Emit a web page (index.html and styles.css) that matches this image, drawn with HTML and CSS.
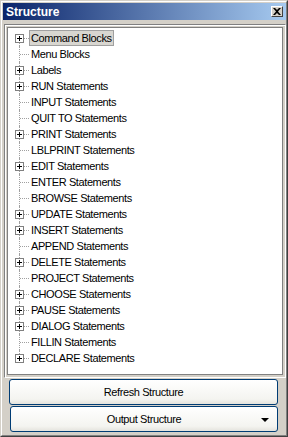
FILE: index.html
```html
<!DOCTYPE html>
<html>

<head>
    <title>Structure</title>
    <meta charset="UTF-8">
    <meta name="viewport" content="width=device-width, initial-scale=1.0">
    <link rel="stylesheet" href="styles.css">
</head>

<body>
    <div class="window">
        <div class="frame">
            <div class="titlebar">
                <span class="title">Structure</span>
                <button class="close" type="button">
                    <svg width="8" height="7" viewBox="0 0 8 7">
                        <path d="M0 0h2l2 2 2-2h2l-3 3.5 3 3.5h-2l-2-2-2 2h-2l3-3.5z" fill="#000" />
                    </svg>
                </button>
            </div>
            <div class="body">
                <div class="group">
                    <ul class="tree">
                        <li class="item"><span class="node"><span class="exp"></span></span><span class="label selected">Command Blocks</span></li>
                        <li class="item"><span class="node"></span><span class="label">Menu Blocks</span></li>
                        <li class="item"><span class="node"><span class="exp"></span></span><span class="label">Labels</span></li>
                        <li class="item"><span class="node"><span class="exp"></span></span><span class="label">RUN Statements</span></li>
                        <li class="item"><span class="node"></span><span class="label">INPUT Statements</span></li>
                        <li class="item"><span class="node"></span><span class="label">QUIT TO Statements</span></li>
                        <li class="item"><span class="node"><span class="exp"></span></span><span class="label">PRINT Statements</span></li>
                        <li class="item"><span class="node"></span><span class="label">LBLPRINT Statements</span></li>
                        <li class="item"><span class="node"><span class="exp"></span></span><span class="label">EDIT Statements</span></li>
                        <li class="item"><span class="node"></span><span class="label">ENTER Statements</span></li>
                        <li class="item"><span class="node"></span><span class="label">BROWSE Statements</span></li>
                        <li class="item"><span class="node"><span class="exp"></span></span><span class="label">UPDATE Statements</span></li>
                        <li class="item"><span class="node"><span class="exp"></span></span><span class="label">INSERT Statements</span></li>
                        <li class="item"><span class="node"></span><span class="label">APPEND Statements</span></li>
                        <li class="item"><span class="node"><span class="exp"></span></span><span class="label">DELETE Statements</span></li>
                        <li class="item"><span class="node"></span><span class="label">PROJECT Statements</span></li>
                        <li class="item"><span class="node"><span class="exp"></span></span><span class="label">CHOOSE Statements</span></li>
                        <li class="item"><span class="node"><span class="exp"></span></span><span class="label">PAUSE Statements</span></li>
                        <li class="item"><span class="node"><span class="exp"></span></span><span class="label">DIALOG Statements</span></li>
                        <li class="item"><span class="node"></span><span class="label">FILLIN Statements</span></li>
                        <li class="item"><span class="node"><span class="exp"></span></span><span class="label">DECLARE Statements</span></li>
                    </ul>
                </div>
                <button class="btn refresh" type="button">Refresh Structure</button>
                <button class="btn output" type="button">Output Structure<span class="caret"></span></button>
            </div>
        </div>
    </div>
</body>

</html>
```

FILE: styles.css
```css
* {
    margin: 0;
    padding: 0;
    box-sizing: border-box;
}

body {
    font-family: "Liberation Sans", Arial, sans-serif;
    font-size: 11px;
    background-color: #d4d0c8;
}

.window {
    width: 288px;
    height: 437px;
    border: 1px solid;
    border-color: #d4d0c8 #404040 #404040 #d4d0c8;
}

.frame {
    height: 100%;
    border: 1px solid;
    border-color: #fff #808080 #808080 #fff;
    padding: 1px 0 0 1px;
    display: flex;
    flex-direction: column;
}

.titlebar {
    height: 17px;
    display: flex;
    align-items: center;
    padding-left: 3px;
    background: linear-gradient(to right, #0a246a, #a6caf0);
}

.title {
    color: #fff;
    font-weight: bold;
    font-size: 12px;
}

.close {
    margin-left: auto;
    margin-right: 3px;
    width: 12px;
    height: 11px;
    display: flex;
    align-items: center;
    justify-content: center;
    background-color: #d4d0c8;
    border: 1px solid;
    border-color: #fff #404040 #404040 #fff;
}

.body {
    flex: 1;
    display: flex;
    flex-direction: column;
}

.group {
    margin: 4px 0 0 1px;
    height: 354px;
    padding: 2px;
    border: 1px solid;
    border-color: #808080 #fff #fff #808080;
    box-shadow: inset 1px 1px #fff;
}

.tree {
    list-style: none;
    height: 100%;
    background-color: #fff;
    border: 1px solid #808080;
    padding-top: 2px;
}

.item {
    display: flex;
    height: 16px;
}

.node {
    position: relative;
    flex: none;
    width: 21px;
}

.node::before {
    content: "";
    position: absolute;
    left: 11px;
    top: 0;
    bottom: 0;
    border-left: 1px dotted #a0a0a0;
}

.item:first-child .node::before {
    top: 8px;
}

.item:last-child .node::before {
    bottom: auto;
    height: 8px;
}

.node::after {
    content: "";
    position: absolute;
    left: 12px;
    top: 8px;
    width: 9px;
    border-top: 1px dotted #a0a0a0;
}

.exp {
    position: absolute;
    z-index: 1;
    left: 7px;
    top: 4px;
    width: 9px;
    height: 9px;
    border: 1px solid #808080;
    background-color: #fff;
}

.exp::before,
.exp::after {
    content: "";
    position: absolute;
    background-color: #000;
}

.exp::before {
    left: 1px;
    top: 3px;
    width: 5px;
    height: 1px;
}

.exp::after {
    left: 3px;
    top: 1px;
    width: 1px;
    height: 5px;
}

.label {
    height: 16px;
    line-height: 14px;
    padding: 0 1px;
    border: 1px solid transparent;
    color: #000;
    letter-spacing: -0.4px;
    white-space: nowrap;
}

.label.selected {
    background-color: #d8d6d0;
    border-color: #a0a0a0;
}

.btn {
    height: 26px;
    font-family: "Liberation Sans", Arial, sans-serif;
    font-size: 11px;
    letter-spacing: -0.4px;
    color: #000;
    border: 1px solid #003c74;
    border-radius: 3px;
    background: linear-gradient(#ffffff, #f4f4f0 80%, #e4e3dd);
}

.refresh {
    margin: 1px 0 0 6px;
    width: 269px;
}

.output {
    position: relative;
    margin: 1px 0 0 7px;
    width: 268px;
}

.caret {
    position: absolute;
    right: 8px;
    top: 11px;
    border-left: 4px solid transparent;
    border-right: 4px solid transparent;
    border-top: 4px solid #000;
}
```
